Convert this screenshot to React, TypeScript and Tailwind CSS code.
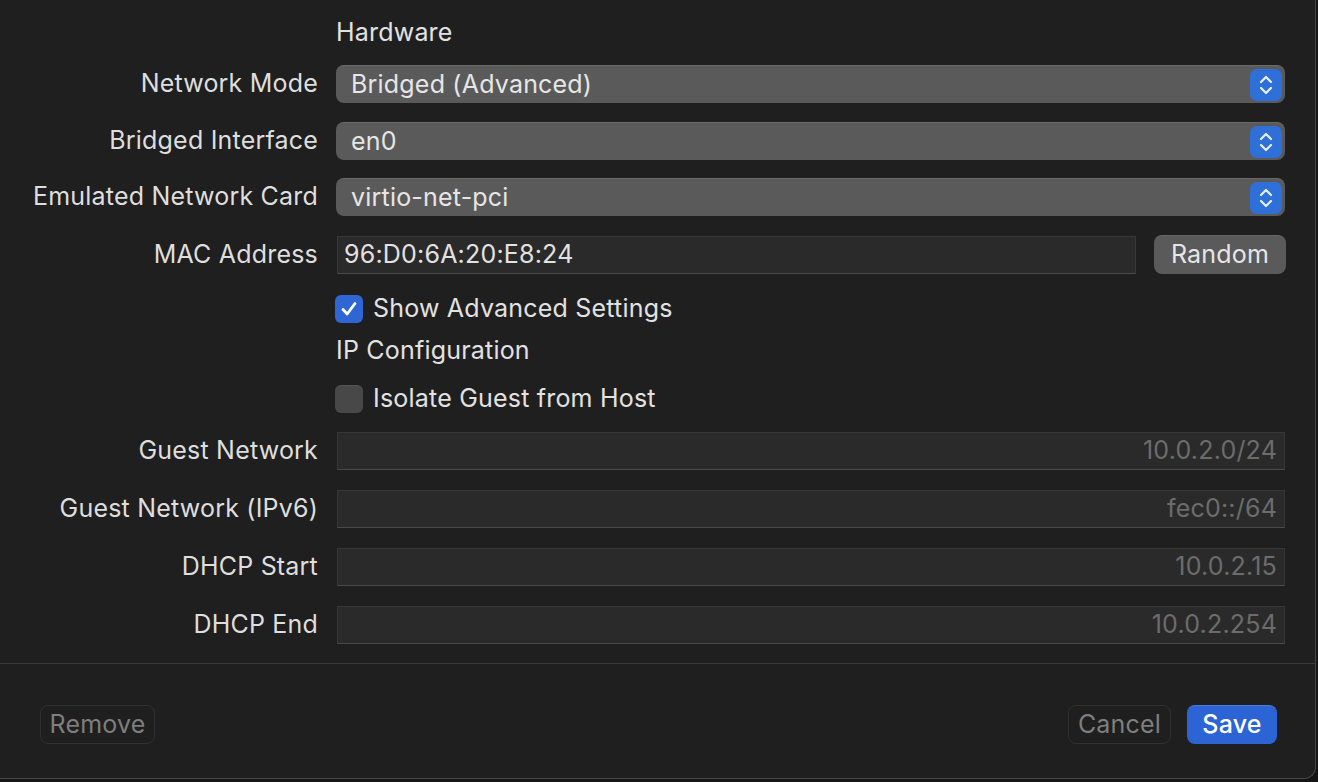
import React from "react";

const font = { fontFamily: "Inter, 'Noto Sans', sans-serif" };

const Stepper = () => (
  <div className="w-[32px] h-[32px] rounded-[7px] bg-[#2f6fd8] flex items-center justify-center">
    <svg width="16" height="22" viewBox="0 0 16 22" fill="none">
      <path d="M3 8 L8 3 L13 8" stroke="#e8efff" strokeWidth="2.2" strokeLinecap="round" strokeLinejoin="round" />
      <path d="M3 14 L8 19 L13 14" stroke="#e8efff" strokeWidth="2.2" strokeLinecap="round" strokeLinejoin="round" />
    </svg>
  </div>
);

const Label = ({ children }: { children: React.ReactNode }) => (
  <div className="w-[319px] shrink-0 pr-[1px] text-right text-[#dedede]">{children}</div>
);

const Popup = ({ label, value, mt }: { label: string; value: string; mt: string }) => (
  <div className={`flex items-center ${mt}`}>
    <Label>{label}</Label>
    <div className="ml-[17px] w-[949px] h-[38px] rounded-[8px] bg-[#5a5a5a] border-t border-[#6a6a6a] flex items-center justify-between pl-[15px] pr-[3px] text-[#e6e6e6]">
      <span>{value}</span>
      <Stepper />
    </div>
  </div>
);

const Field = ({ label, value, mt }: { label: string; value: string; mt: string }) => (
  <div className={`flex items-center ${mt}`}>
    <Label>{label}</Label>
    <div className="ml-[18px] w-[948px] h-[38px] bg-[#2a2a2a] border border-[#363636] border-b-[#4a4a4a] flex items-center justify-end pr-[7px] text-[#6c6c6c]">
      {value}
    </div>
  </div>
);

const Checkbox = ({ checked, label, mt }: { checked: boolean; label: string; mt: string }) => (
  <div className={`flex items-center h-[28px] ${mt}`}>
    <div className="w-[335px] shrink-0" />
    <div
      className={`w-[28px] h-[28px] rounded-[6px] flex items-center justify-center ${
        checked ? "bg-[#2f66d4]" : "bg-[#484848] border-t border-[#555555]"
      }`}
    >
      {checked && (
        <svg width="20" height="20" viewBox="0 0 20 20" fill="none">
          <path d="M4 10.5 L8.2 15 L16 4.5" stroke="#ffffff" strokeWidth="2.8" strokeLinecap="round" strokeLinejoin="round" />
        </svg>
      )}
    </div>
    <span className="ml-[10px] text-[#e2e2e2]">{label}</span>
  </div>
);

export default function App() {
  return (
    <div className="w-[1318px] h-[782px] bg-[#151515] overflow-hidden" style={font}>
      <div className="w-[1316px] h-[779px] bg-[#1f1f1f] border-r border-b border-[#474747] rounded-br-[12px] flex flex-col text-[25px] tracking-[0.2px]">
        <div className="flex items-center h-[30px] mt-[18px]">
          <div className="w-[336px] shrink-0" />
          <span className="text-[#e2e2e2]">Hardware</span>
        </div>

        <Popup label="Network Mode" value="Bridged (Advanced)" mt="mt-[17px]" />
        <Popup label="Bridged Interface" value="en0" mt="mt-[19px]" />
        <Popup label="Emulated Network Card" value="virtio-net-pci" mt="mt-[18px]" />

        <div className="flex items-center mt-[19px]">
          <Label>MAC Address</Label>
          <div className="ml-[18px] w-[799px] h-[38px] bg-[#2a2a2a] border border-[#383838] border-b-[#4a4a4a] flex items-center pl-[6px] text-[#e2e2e2]">
            96:D0:6A:20:E8:24
          </div>
          <div className="ml-[18px] w-[132px] h-[39px] rounded-[8px] bg-[#5a5a5a] border-t border-[#666666] flex items-center justify-center text-[#e6e6e6]">
            Random
          </div>
        </div>

        <Checkbox checked label="Show Advanced Settings" mt="mt-[21px]" />

        <div className="flex items-center h-[28px] mt-[14px]">
          <div className="w-[336px] shrink-0" />
          <span className="text-[#e2e2e2]">IP Configuration</span>
        </div>

        <Checkbox checked={false} label="Isolate Guest from Host" mt="mt-[20px]" />

        <Field label="Guest Network" value="10.0.2.0/24" mt="mt-[19px]" />
        <Field label="Guest Network (IPv6)" value="fec0::/64" mt="mt-[20px]" />
        <Field label="DHCP Start" value="10.0.2.15" mt="mt-[20px]" />
        <Field label="DHCP End" value="10.0.2.254" mt="mt-[20px]" />

        <div className="mt-[19px] h-px bg-[#3a3a3a]" />

        <div className="flex items-center mt-[41px] px-[40px]">
          <div className="w-[115px] h-[39px] rounded-[8px] border border-[#303030] flex items-center justify-center text-[#7e7e7e]">
            Remove
          </div>
          <div className="flex-1" />
          <div className="w-[103px] h-[39px] rounded-[8px] border border-[#303030] flex items-center justify-center text-[#7e7e7e]">
            Cancel
          </div>
          <div className="ml-[16px] mr-[-2px] w-[90px] h-[39px] rounded-[8px] bg-[#2d64d5] border-t border-[#4a7de0] flex items-center justify-center text-white font-medium">
            Save
          </div>
        </div>
      </div>
    </div>
  );
}
